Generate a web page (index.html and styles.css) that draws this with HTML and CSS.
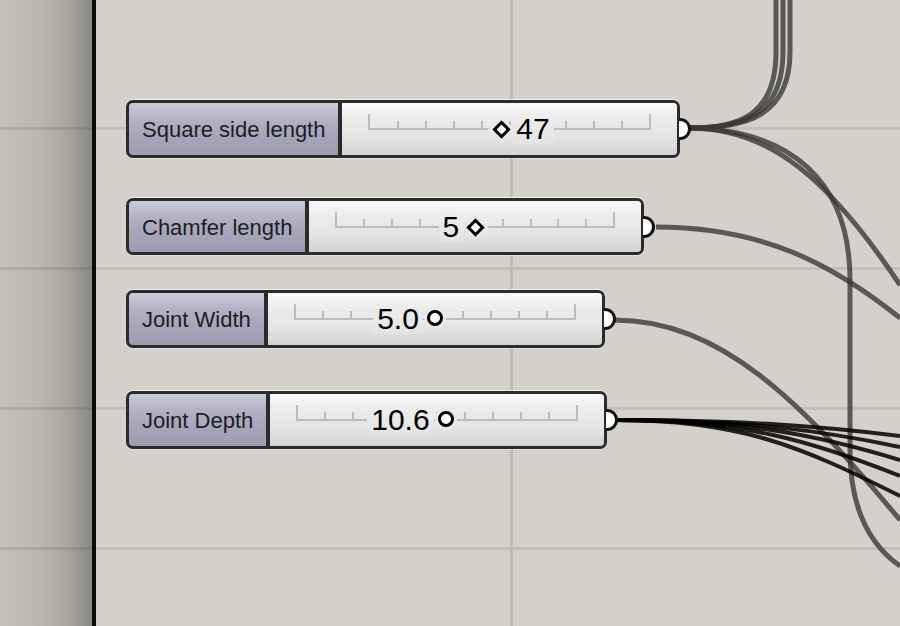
FILE: index.html
```html
<!DOCTYPE html>
<html lang="en">
<head>
  <meta charset="UTF-8">
  <meta name="viewport" content="width=device-width, initial-scale=1.0">
  <title>Sliders</title>
  <link rel="stylesheet" href="styles.css">
</head>
<body>
  <div class="canvas">
    <div class="dock"></div>
    <div class="edge"></div>
    <div class="board">
      <!-- wires, in page coordinates (board starts at x=96) -->
      <svg class="wires" width="804" height="626" viewBox="96 0 804 626">
        <g class="wire">
          <path d="M690,128 C738,128 776,116 776,52 L776,0" />
          <path d="M690,128 C742,128 783,116 783,52 L783,0" />
          <path d="M690,128 C746,128 790,116 790,52 L790,0" />
          <path d="M690,128 C790,130 850,180 850,280 L850,450 C850,510 870,545 900,566" />
          <path d="M690,128 C770,128 830,180 900,285" />
          <path d="M656,227 C760,227 830,262 900,318" />
          <path d="M614,320 C720,320 800,400 900,520" />
        </g>
        <g class="wire dark">
          <path d="M616,420 C740,420 820,426 900,436" />
          <path d="M616,420 C740,420 820,430 900,447" />
          <path d="M616,420 C740,420 815,434 900,460" />
          <path d="M616,420 C740,420 810,440 900,476" />
          <path d="M616,420 C740,420 800,446 900,496" />
        </g>
      </svg>

      <div class="slider n1">
        <div class="slider-name">Square side length</div>
        <div class="slider-body">
          <div class="track">
            <span class="tick"></span><span class="tick"></span><span class="tick"></span><span class="tick"></span><span class="tick"></span><span class="tick"></span><span class="tick"></span><span class="tick"></span><span class="tick"></span><span class="tick"></span><span class="tick"></span>
            <div class="thumb" style="left: 47%">
              <span class="knob diamond"></span>
              <span class="value right">47</span>
            </div>
          </div>
        </div>
        <span class="port"></span>
      </div>

      <div class="slider n2">
        <div class="slider-name">Chamfer length</div>
        <div class="slider-body">
          <div class="track">
            <span class="tick"></span><span class="tick"></span><span class="tick"></span><span class="tick"></span><span class="tick"></span><span class="tick"></span><span class="tick"></span><span class="tick"></span><span class="tick"></span><span class="tick"></span><span class="tick"></span>
            <div class="thumb" style="left: 50%">
              <span class="knob diamond"></span>
              <span class="value left">5</span>
            </div>
          </div>
        </div>
        <span class="port"></span>
      </div>

      <div class="slider n3">
        <div class="slider-name">Joint Width</div>
        <div class="slider-body">
          <div class="track">
            <span class="tick"></span><span class="tick"></span><span class="tick"></span><span class="tick"></span><span class="tick"></span><span class="tick"></span><span class="tick"></span><span class="tick"></span><span class="tick"></span><span class="tick"></span><span class="tick"></span>
            <div class="thumb" style="left: 50%">
              <span class="knob circle"></span>
              <span class="value left">5.0</span>
            </div>
          </div>
        </div>
        <span class="port"></span>
      </div>

      <div class="slider n4">
        <div class="slider-name">Joint Depth</div>
        <div class="slider-body">
          <div class="track">
            <span class="tick"></span><span class="tick"></span><span class="tick"></span><span class="tick"></span><span class="tick"></span><span class="tick"></span><span class="tick"></span><span class="tick"></span><span class="tick"></span><span class="tick"></span><span class="tick"></span>
            <div class="thumb" style="left: 53%">
              <span class="knob circle"></span>
              <span class="value left">10.6</span>
            </div>
          </div>
        </div>
        <span class="port"></span>
      </div>
    </div>
  </div>
</body>
</html>
```

FILE: styles.css
```css
body {
  margin: 0;
  font-family: "Liberation Sans", Arial, sans-serif;
}
.canvas {
  display: flex;
  width: 900px;
  height: 626px;
  overflow: hidden;
}
.dock {
  width: 92px;
  flex: none;
  background:
    linear-gradient(to bottom, rgba(70, 65, 60, 0.14) 0 3px, transparent 3px) 0 127px / 100% 140px repeat-y,
    linear-gradient(to right, #c6c2ba 0%, #bcb8b0 40%, #aaa79f 72%, #8a8882 100%);
}
.edge {
  width: 4px;
  flex: none;
  background: #0b0b0b;
}
.board {
  position: relative;
  flex: 1;
  background:
    linear-gradient(to right, transparent 414px, #c0bbb4 414px, #c0bbb4 417px, transparent 417px),
    linear-gradient(to bottom, #c4bfb8 0 3px, transparent 3px) 0 127px / 100% 140px repeat-y,
    #d5d1ca;
}
.wires {
  position: absolute;
  left: 0;
  top: 0;
}
.wire path {
  fill: none;
  stroke: #3a3935;
  stroke-width: 5;
  stroke-opacity: 0.8;
}
.wire.dark path {
  stroke: #000;
  stroke-width: 4;
  stroke-opacity: 0.85;
}

/* number slider */
.slider {
  position: absolute;
  left: 30px;
  display: flex;
  box-sizing: border-box;
  height: 58px;
  border: 3px solid #2b2b2b;
  border-radius: 7px;
  background: linear-gradient(to bottom, #cdccda 0%, #b4b2c5 30%, #a7a5b9 62%, #9e9cb1 100%);
  box-shadow: 0 -1px 0 rgba(255, 255, 255, 0.7), 0 1px 0 rgba(255, 255, 255, 0.35);
}
.n1 { top: 100px; width: 554px; }
.n2 { top: 198px; width: 518px; height: 57px; }
.n3 { top: 290px; width: 479px; }
.n4 { top: 391px; width: 481px; }

.slider-name {
  display: flex;
  align-items: center;
  padding: 2px 13px 0;
  font-size: 22px;
  color: #1d1d22;
  white-space: nowrap;
  border-radius: 4px 0 0 4px;
}
.slider-body {
  position: relative;
  flex: 1;
  border-left: 4px solid #2b2b2b;
  border-radius: 0 4px 4px 0;
  background: linear-gradient(to bottom, #f8f8f8 0%, #ececec 30%, #e4e4e4 65%, #d3d3d3 100%);
}
.track {
  position: absolute;
  left: 26px;
  right: 26px;
  top: 11px;
  height: 16px;
  box-sizing: border-box;
  display: flex;
  justify-content: space-between;
  align-items: flex-end;
  border-bottom: 2px solid #bcbcbc;
}
.tick {
  width: 2px;
  height: 7px;
  background: #bcbcbc;
}
.tick:first-child,
.tick:last-of-type {
  height: 14px;
}
.thumb {
  position: absolute;
  top: 0;
  bottom: 0;
  width: 0;
}
.knob {
  position: absolute;
  background: #fff;
  border: 3px solid #000;
}
.diamond {
  left: -6.5px;
  top: 8.5px;
  width: 7px;
  height: 7px;
  transform: rotate(45deg);
  box-shadow: 0 0 0 3px #e9e9e9;
}
.circle {
  left: -8px;
  top: 6px;
  width: 10px;
  height: 10px;
  border-radius: 50%;
  box-shadow: 0 0 0 3px #e9e9e9;
}
.value {
  position: absolute;
  top: 0;
  padding: 0 4px;
  font-size: 30px;
  line-height: 30px;
  color: #000;
  background: linear-gradient(to bottom, #eeeeee, #e3e3e3);
  white-space: nowrap;
}
.value.right { left: 11px; }
.value.left { right: 12px; }

.port {
  position: absolute;
  right: -14px;
  top: 50%;
  width: 9px;
  height: 16px;
  margin-top: -11px;
  background: #fff;
  border: 3px solid #111;
  border-left: none;
  border-radius: 0 11px 11px 0;
}
```
